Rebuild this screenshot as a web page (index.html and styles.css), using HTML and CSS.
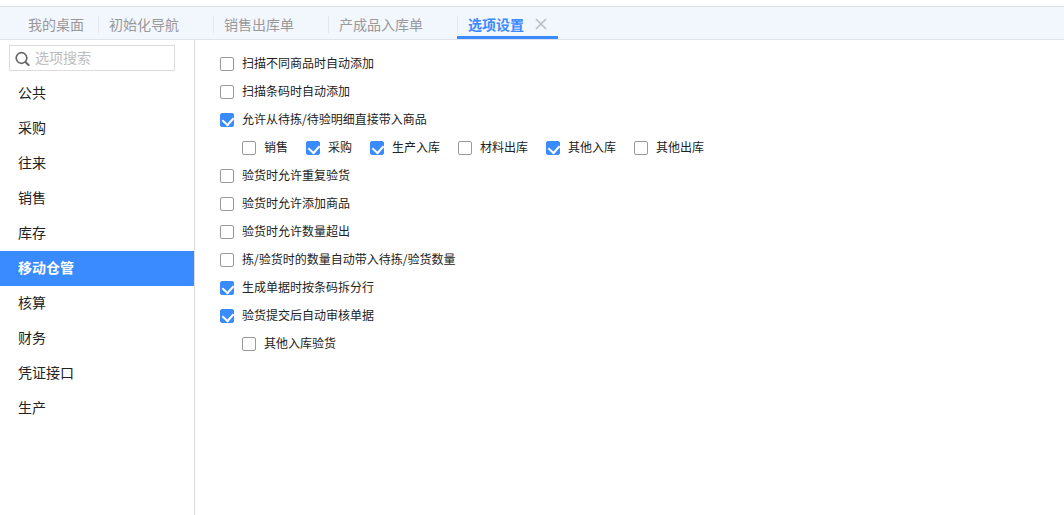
FILE: index.html
```html
<!DOCTYPE html>
<html lang="zh">
<head>
<meta charset="utf-8">
<title>选项设置</title>
<link rel="stylesheet" href="styles.css">
</head>
<body>
<div class="app">
  <nav class="tabs">
    <div class="tab t1">我的桌面</div>
    <div class="tab t2">初始化导航</div>
    <div class="tab t2">销售出库单</div>
    <div class="tab t4">产成品入库单</div>
    <div class="tab active">选项设置
      <svg class="close" width="12" height="12" viewBox="0 0 12 12"><path d="M1 1l10 10M11 1L1 11" stroke="#b9bcc2" stroke-width="1.6" fill="none"/></svg>
    </div>
  </nav>
  <div class="main">
    <aside class="side">
      <div class="search">
        <svg width="16" height="16" viewBox="0 0 16 16"><circle cx="6.5" cy="8" r="5.3" stroke="#666" stroke-width="1.7" fill="none"/><path d="M10.3 11.8l3.9 3.9" stroke="#666" stroke-width="2" fill="none"/></svg>
        <span class="ph">选项搜索</span>
      </div>
      <ul class="menu">
        <li>公共</li><li>采购</li><li>往来</li><li>销售</li><li>库存</li>
        <li class="on">移动仓管</li>
        <li>核算</li><li>财务</li><li>凭证接口</li><li>生产</li>
      </ul>
    </aside>
    <section class="opts">
      <div class="row"><i class="cb"></i>扫描不同商品时自动添加</div>
      <div class="row"><i class="cb"></i>扫描条码时自动添加</div>
      <div class="row"><i class="cb ck"></i>允许从待拣/待验明细直接带入商品</div>
      <div class="row sub">
        <span class="it w64"><i class="cb"></i>销售</span>
        <span class="it w64"><i class="cb ck"></i>采购</span>
        <span class="it w88"><i class="cb ck"></i>生产入库</span>
        <span class="it w88"><i class="cb"></i>材料出库</span>
        <span class="it w88"><i class="cb ck"></i>其他入库</span>
        <span class="it"><i class="cb"></i>其他出库</span>
      </div>
      <div class="row"><i class="cb"></i>验货时允许重复验货</div>
      <div class="row"><i class="cb"></i>验货时允许添加商品</div>
      <div class="row"><i class="cb"></i>验货时允许数量超出</div>
      <div class="row"><i class="cb"></i>拣/验货时的数量自动带入待拣/验货数量</div>
      <div class="row"><i class="cb ck"></i>生成单据时按条码拆分行</div>
      <div class="row"><i class="cb ck"></i>验货提交后自动审核单据</div>
      <div class="row sub"><span class="it"><i class="cb"></i>其他入库验货</span></div>
    </section>
  </div>
</div>
</body>
</html>
```
FILE: styles.css
```css
* { box-sizing: border-box; }
html, body { margin: 0; height: 100%; background: #fff; overflow: hidden; }
body { font-family: "Noto Sans CJK SC", "Liberation Sans", sans-serif; color: #222; }
.app { height: 515px; display: flex; flex-direction: column; padding-top: 6px; }
.tabs {
  height: 34px; display: flex; align-items: stretch; padding-left: 17px;
  background: #f2f6fd; border-top: 1px solid #e0e0e0; border-bottom: 1px solid #e0e4ea;
}
.tab {
  position: relative; flex: none; font-size: 14px; line-height: 34px; color: #999;
  padding-left: 11px; white-space: nowrap;
}
.t1 { width: 81px; }
.t2 { width: 115px; }
.t4 { width: 129px; }
.tab + .tab::before {
  content: ""; position: absolute; left: 0; top: 9px; height: 17px; width: 1px; background: #e4e8ee;
}
.tab.active {
  color: #3a8bff; font-weight: 700; width: 101px;
  display: flex; align-items: center; height: 32px; padding-top: 5px;
  border-bottom: 3px solid #3a8bff; line-height: 20px;
}
.close { margin-left: 11px; }
.main { flex: 1; display: flex; min-height: 0; }
.side { width: 195px; border-right: 1px solid #dcdcdc; padding-top: 5px; flex: none; }
.search {
  margin-left: 9px; width: 166px; height: 26px; border: 1px solid #dcdcdc;
  display: flex; align-items: center; gap: 4px; padding-left: 5px;
  font-size: 14px; color: #bdbdbd;
}
.ph { line-height: 22px; margin-bottom: 2px; }
.menu { list-style: none; margin: 5px 0 0; padding: 0; }
.menu li { height: 35px; line-height: 33px; padding-left: 18px; font-size: 14px; color: #222; }
.menu li.on { background: #3a8bff; color: #fff; font-weight: 700; }
.opts { flex: 1; padding: 10px 0 0 25px; }
.row { height: 28px; padding-bottom: 4px; display: flex; align-items: center; font-size: 12px; color: #222; white-space: nowrap; }
.row.sub { padding-left: 22px; }
.it { display: flex; align-items: center; }
.w64 { width: 64px; }
.w88 { width: 88px; }
.cb {
  width: 14px; height: 14px; margin: 4px 8px 0 0; border: 1px solid #999; border-radius: 2px;
  background: #fff; flex: none; position: relative;
}
.cb.ck { background: #3a8bff; border-color: #3a8bff; }
.cb.ck::after {
  content: ""; position: absolute; left: 3px; top: 1px; width: 6px; height: 8px;
  border: solid #fff; border-width: 0 2px 2px 0; transform: rotate(42deg);
}
```
